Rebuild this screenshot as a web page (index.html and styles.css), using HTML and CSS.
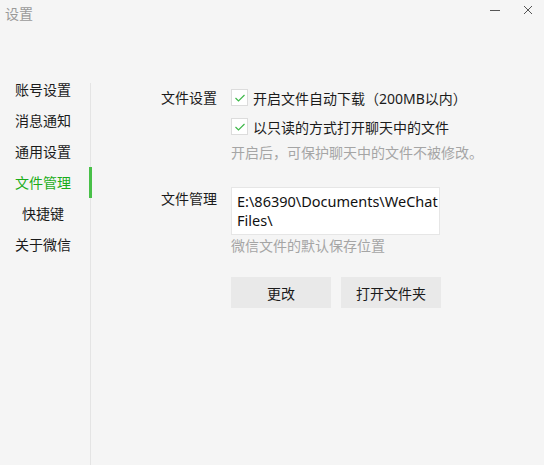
FILE: index.html
```html
<!DOCTYPE html>
<html lang="zh-CN">
<head>
<meta charset="utf-8">
<title>设置</title>
<link rel="stylesheet" href="styles.css">
</head>
<body>
<div class="window">
  <header class="titlebar">
    <span class="title">设置</span>
    <div class="controls">
      <span class="ctrl">
        <svg width="12" height="12" viewBox="0 0 12 12"><path d="M1 6.5H11" stroke="#555" stroke-width="1"/></svg>
      </span>
      <span class="ctrl">
        <svg width="12" height="12" viewBox="0 0 12 12"><path d="M2 2L10 10M10 2L2 10" stroke="#555" stroke-width="1"/></svg>
      </span>
    </div>
  </header>
  <div class="body">
    <nav class="sidebar">
      <div class="nav-item">账号设置</div>
      <div class="nav-item">消息通知</div>
      <div class="nav-item">通用设置</div>
      <div class="nav-item active">文件管理</div>
      <div class="nav-item">快捷键</div>
      <div class="nav-item">关于微信</div>
    </nav>
    <main class="content">
      <section class="row first">
        <div class="label">文件设置</div>
        <div class="field">
          <label class="check"><span class="box"><svg width="12" height="10" viewBox="0 0 12 10"><path d="M1.5 5L4.5 8L10.5 2" fill="none" stroke="#3fb84a" stroke-width="1.2"/></svg></span>开启文件自动下载（200MB以内）</label>
          <label class="check"><span class="box"><svg width="12" height="10" viewBox="0 0 12 10"><path d="M1.5 5L4.5 8L10.5 2" fill="none" stroke="#3fb84a" stroke-width="1.2"/></svg></span>以只读的方式打开聊天中的文件</label>
          <div class="hint">开启后，可保护聊天中的文件不被修改。</div>
        </div>
      </section>
      <section class="row second">
        <div class="label">文件管理</div>
        <div class="field">
          <div class="path">E:\86390\Documents\WeChat Files\</div>
          <div class="hint hint2">微信文件的默认保存位置</div>
          <div class="buttons">
            <button class="btn">更改</button>
            <button class="btn">打开文件夹</button>
          </div>
        </div>
      </section>
    </main>
  </div>
</div>
</body>
</html>
```
FILE: styles.css
```css
html, body {
  margin: 0;
  padding: 0;
  background: #f5f5f5;
}
body {
  font-family: "Noto Sans", "Noto Sans CJK SC", sans-serif;
  font-size: 14px;
  color: #1b1b1b;
}
.window {
  width: 544px;
  height: 465px;
  display: flex;
  flex-direction: column;
  overflow: hidden;
}
.titlebar {
  height: 28px;
  display: flex;
  align-items: center;
  justify-content: space-between;
  padding-left: 5px;
}
.title {
  color: #9a9a9a;
  font-size: 14px;
  line-height: 28px;
}
.controls {
  display: flex;
  align-items: center;
  height: 20px;
  align-self: flex-start;
  margin-top: 0;
}
.ctrl {
  width: 33px;
  height: 20px;
  display: flex;
  align-items: center;
  justify-content: center;
}
.body {
  flex: 1;
  display: flex;
  padding-top: 46px;
}
.sidebar {
  width: 86px;
  padding-right: 6px;
  position: relative;
}
.sidebar::after {
  content: "";
  position: absolute;
  top: 9px;
  bottom: 0;
  left: 90px;
  width: 1px;
  background: #e4e4e4;
}
.nav-item {
  height: 31px;
  line-height: 31px;
  text-align: center;
  position: relative;
}
.nav-item.active {
  color: #1aad19;
}
.nav-item.active::after {
  content: "";
  position: absolute;
  top: 0;
  right: -6px;
  width: 3px;
  height: 31px;
  background: #48c048;
  z-index: 1;
}
.content {
  flex: 1;
  padding-left: 69px;
  padding-top: 9px;
}
.row {
  display: flex;
}
.label {
  width: 70px;
  line-height: 29px;
}
.second .label {
  line-height: 24px;
}
.field {
  display: flex;
  flex-direction: column;
}
.check {
  display: flex;
  align-items: center;
  height: 29px;
}
.box {
  width: 15px;
  height: 15px;
  border: 1px solid #dcdcdc;
  background: #fff;
  display: flex;
  align-items: center;
  justify-content: center;
  margin-right: 5px;
}
.hint {
  color: #a5a5a5;
  line-height: 24px;
}
.second {
  margin-top: 22px;
}
.path {
  width: 198px;
  height: 38px;
  padding: 4px 4px 4px 5px;
  border: 1px solid #e6e6e6;
  background: #fff;
  font-size: 14.5px;
  line-height: 19px;
  color: #111;
}
.hint2 {
  line-height: 22px;
}
.buttons {
  display: flex;
  gap: 10px;
  margin-top: 20px;
}
.btn {
  width: 100px;
  height: 31px;
  border: none;
  background: #e9e9e9;
  font-family: inherit;
  font-size: 14px;
  color: #1b1b1b;
  padding: 0;
}
```
